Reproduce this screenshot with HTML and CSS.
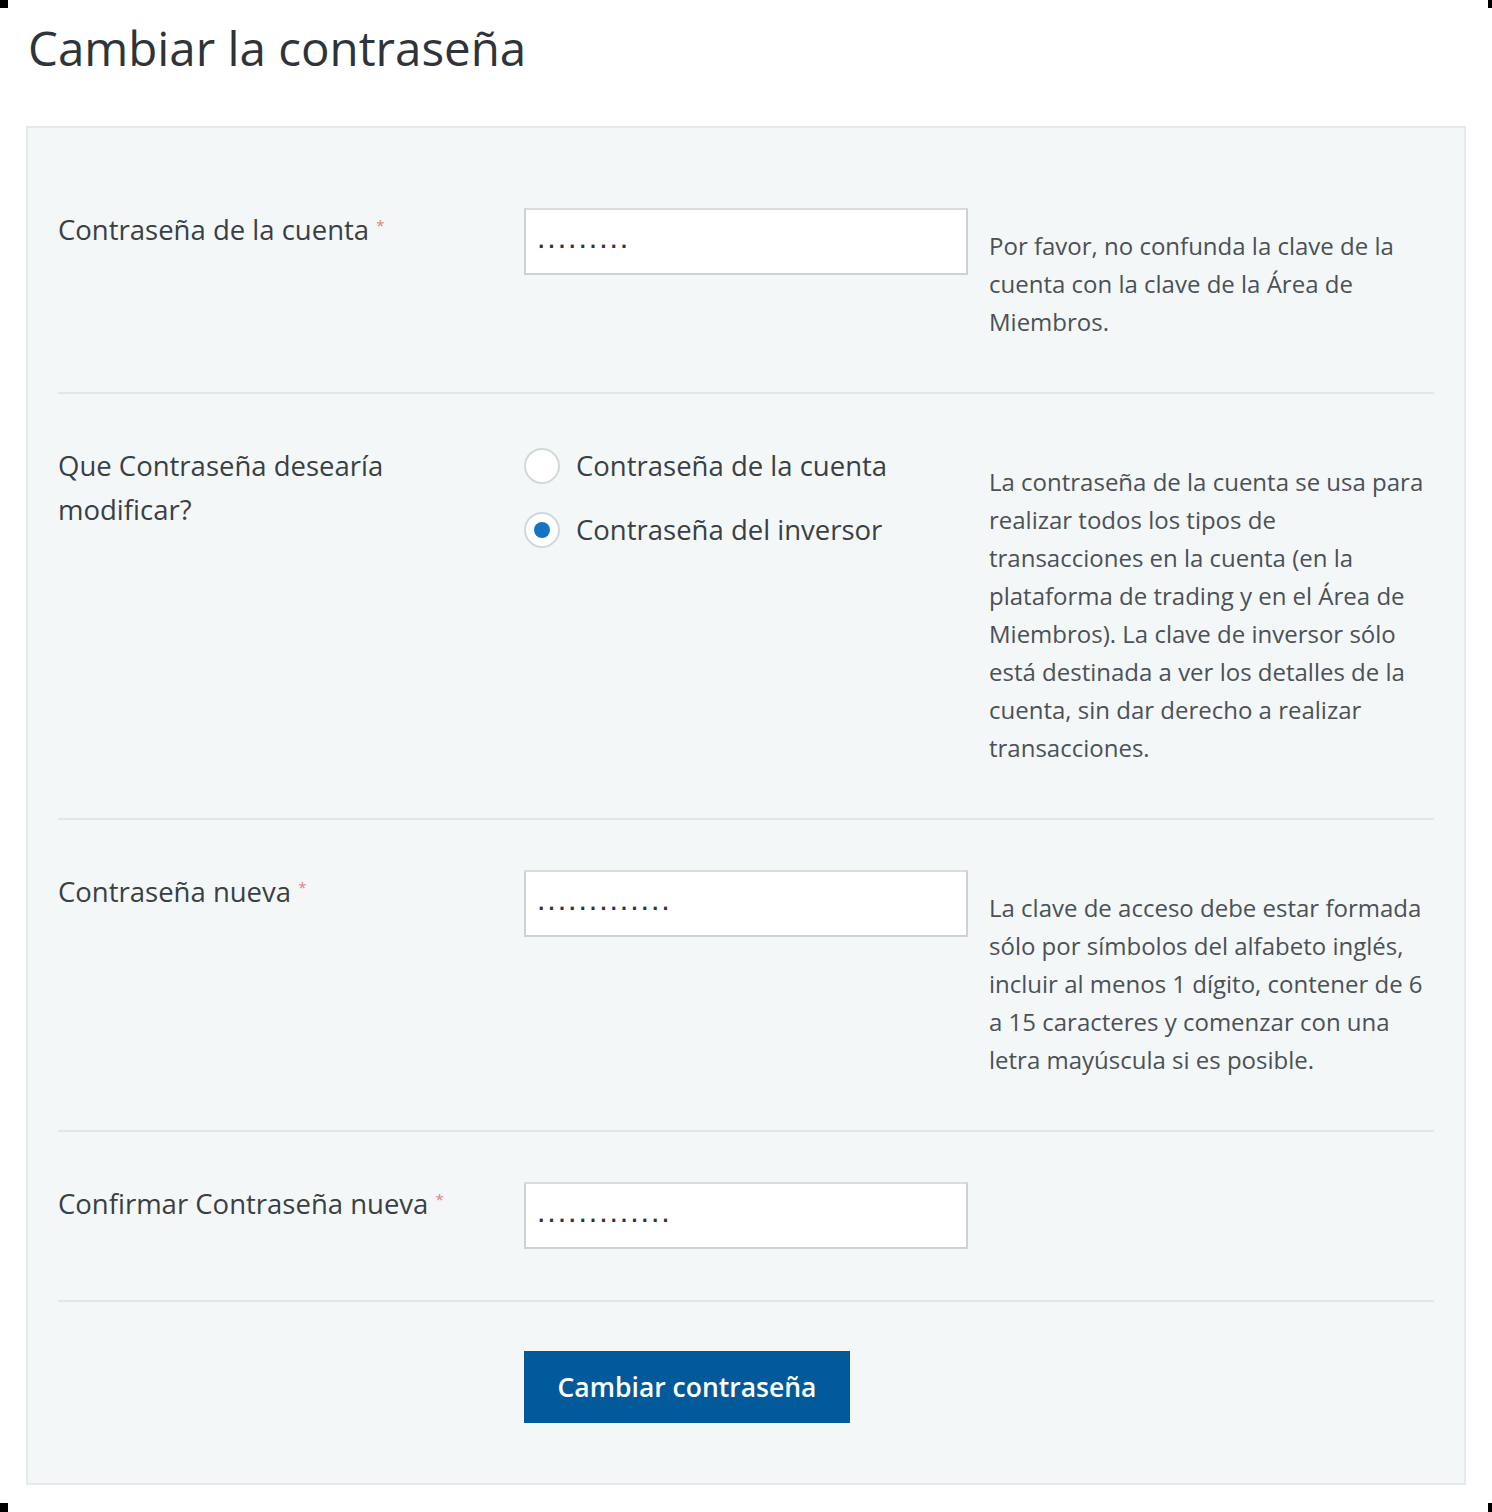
FILE: index.html
```html
<!DOCTYPE html>
<html lang="es">
<head>
<meta charset="utf-8">
<title>Cambiar la contraseña</title>
<link rel="stylesheet" href="styles.css">
</head>
<body>
<div class="page">
  <h1 class="title">Cambiar la contraseña</h1>
  <form class="panel">
    <div class="row">
      <label class="label">Contraseña de la cuenta <span class="req">*</span></label>
      <div class="field"><input class="input" type="text" value="·········" readonly></div>
      <p class="help">Por favor, no confunda la clave de la cuenta con la clave de la Área de Miembros.</p>
    </div>
    <div class="row">
      <label class="label">Que Contraseña desearía modificar?</label>
      <div class="field radios">
        <label class="radio"><input type="radio" name="which" class="radio-input"><span>Contraseña de la cuenta</span></label>
        <label class="radio"><input type="radio" name="which" class="radio-input" checked><span>Contraseña del inversor</span></label>
      </div>
      <p class="help">La contraseña de la cuenta se usa para realizar todos los tipos de transacciones en la cuenta (en la plataforma de trading y en el Área de Miembros). La clave de inversor sólo está destinada a ver los detalles de la cuenta, sin dar derecho a realizar transacciones.</p>
    </div>
    <div class="row">
      <label class="label">Contraseña nueva <span class="req">*</span></label>
      <div class="field"><input class="input" type="text" value="·············" readonly></div>
      <p class="help">La clave de acceso debe estar formada sólo por símbolos del alfabeto inglés, incluir al menos 1 dígito, contener de 6 a 15 caracteres y comenzar con una letra mayúscula si es posible.</p>
    </div>
    <div class="row">
      <label class="label">Confirmar Contraseña nueva <span class="req">*</span></label>
      <div class="field"><input class="input" type="text" value="·············" readonly></div>
      <p class="help"></p>
    </div>
    <div class="actions">
      <button type="button" class="btn">Cambiar contraseña</button>
    </div>
  </form>
</div>
<span class="corner corner-tl"></span>
<span class="corner corner-tr"></span>
<span class="corner corner-bl"></span>
<span class="corner corner-br"></span>
</body>
</html>
```
FILE: styles.css
```css
* { box-sizing: border-box; }
html, body { margin: 0; padding: 0; background: #ffffff; }
body { font-family: "Open Sans", "Noto Sans", sans-serif; color: #3a3f44; position: relative; min-height: 1512px; }
.page { padding: 14px 26px 26px 26px; }
.title {
  margin: 0 0 0 2px;
  font-family: "Open Sans", sans-serif;
  font-weight: 400;
  font-size: 47.5px;
  line-height: 68px;
  height: 112px;
  color: #2f3439;
}
.panel {
  display: block;
  width: 1440px;
  background: #f4f7f8;
  border: 2px solid #e6eaec;
  padding: 30px 30px 60px 30px;
}
.row {
  display: grid;
  grid-template-columns: 466px 444px 1fr;
  padding: 50px 0 51px 0;
  border-bottom: 2px solid #e1e6e8;
  align-items: start;
}
.label {
  font-size: 27.5px;
  line-height: 44px;
  color: #3a3f44;
  padding-right: 60px;
}
.req {
  font-size: 15px;
  line-height: 0;
  color: #e0857e;
  vertical-align: 9px;
}
.input {
  display: block;
  width: 444px;
  height: 67px;
  border: 2px solid #cdd2d5;
  border-top-color: #d8dcdf;
  background: #ffffff;
  padding: 10px 12px 0 12px;
  font-family: "DejaVu Sans", sans-serif;
  font-weight: 700;
  font-size: 17px;
  letter-spacing: 3.9px;
  color: #2f3439;
  outline: none;
}
.help {
  margin: 0;
  padding: 19px 0 0 21px;
  font-size: 24px;
  line-height: 38px;
  color: #4b5156;
}
.radios { display: flex; flex-direction: column; gap: 20px; }
.radio {
  display: flex;
  align-items: center;
  gap: 16px;
  font-size: 27.5px;
  line-height: 44px;
  color: #3a3f44;
}
.radio-input {
  appearance: none;
  -webkit-appearance: none;
  margin: 0;
  width: 36px;
  height: 36px;
  border-radius: 50%;
  border: 2px solid #d3d8db;
  background: #ffffff;
  display: grid;
  place-items: center;
  flex: none;
}
.radio-input:checked::after {
  content: "";
  width: 16px;
  height: 16px;
  border-radius: 50%;
  background: #1673c1;
}
.actions {
  padding: 49px 0 0 466px;
}
.btn {
  display: block;
  width: 326px;
  height: 72px;
  border: 0;
  background: #025a9b;
  color: #ffffff;
  font-family: "Open Sans", sans-serif;
  font-weight: 600;
  font-size: 26.5px;
}
.corner {
  position: absolute;
  width: 8px;
  height: 8px;
  background: #000000;
}
.corner-tl { left: 0; top: 0; }
.corner-tr { right: 0; top: 0; width: 4px; }
.corner-bl { left: 0; bottom: 0; height: 9px; }
.corner-br { right: 0; bottom: 0; width: 4px; height: 9px; }
```
